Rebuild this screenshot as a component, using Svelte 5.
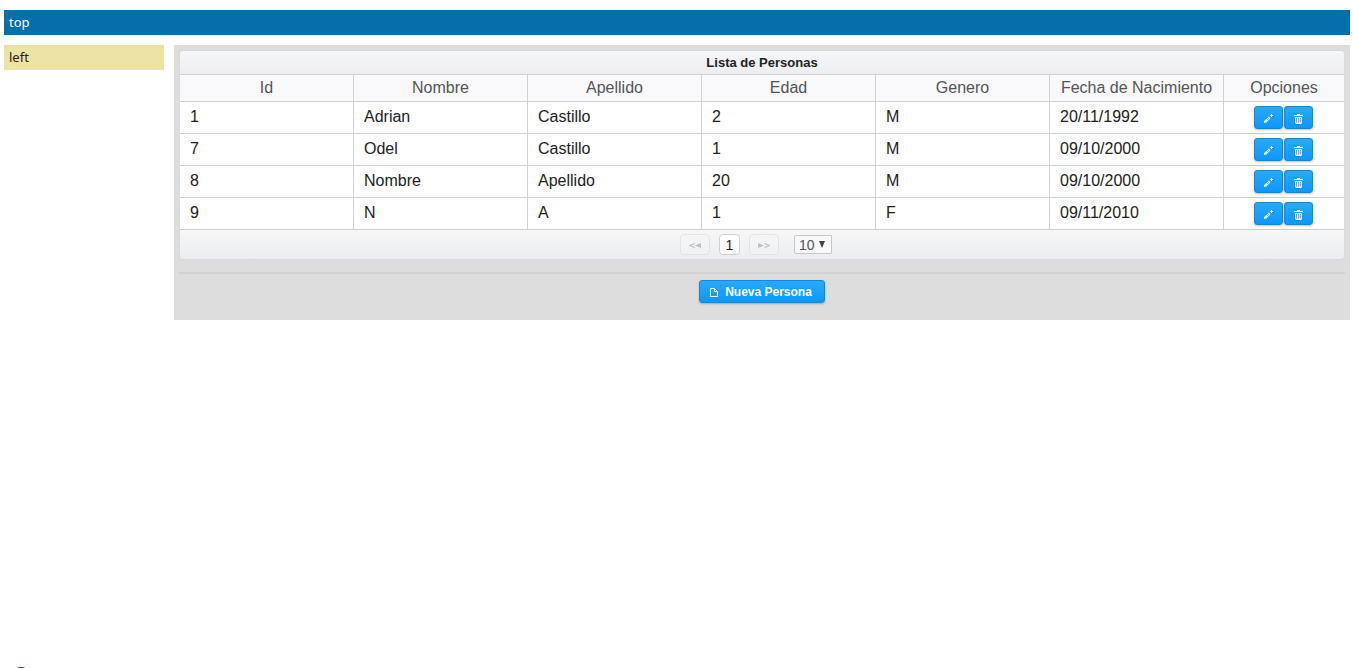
<script>
  const columns = ['Id', 'Nombre', 'Apellido', 'Edad', 'Genero', 'Fecha de Nacimiento'];
  const people = [
    ['1', 'Adrian', 'Castillo', '2', 'M', '20/11/1992'],
    ['7', 'Odel', 'Castillo', '1', 'M', '09/10/2000'],
    ['8', 'Nombre', 'Apellido', '20', 'M', '09/10/2000'],
    ['9', 'N', 'A', '1', 'F', '09/11/2010'],
  ];
</script>

<div class="page">
  <header class="top">top</header>
  <div class="body">
    <aside class="left">left</aside>
    <main>
      <section class="datatable">
        <h2 id="list-title">Lista de Personas</h2>
        <table aria-labelledby="list-title">
          <thead>
            <tr>
              {#each columns as column}
                <th scope="col">{column}</th>
              {/each}
              <th scope="col" class="options">Opciones</th>
            </tr>
          </thead>
          <tbody>
            {#each people as person}
              <tr>
                {#each person as value}
                  <td>{value}</td>
                {/each}
                <td class="options">
                  <div class="actions">
                    <button class="blue icon" aria-label="Editar">
                      <svg width="9" height="9" viewBox="0 0 9 9" fill="#fff">
                        <path d="M0 9 .4 6.7 4.9 2.4 6.6 4.1 2.3 8.6Z" />
                        <path d="M6 1H7V0H8V1H9V2H8V3H7V2H6Z" />
                        <path d="M1.4 7.6 5 4" fill="none" stroke="#1b9df5" stroke-width=".7" stroke-dasharray="1.2 .8" />
                      </svg>
                    </button>
                    <button class="blue icon" aria-label="Eliminar">
                      <svg width="9" height="10" viewBox="0 0 9 10" fill="#fff">
                        <path d="M3 0H6V1H9V2H0V1H3Z" />
                        <path fill-rule="evenodd" d="M1 3H8V9L7 10H2L1 9ZM2.2 4V8.5H3V4ZM4.1 4V8.5H4.9V4ZM6 4V8.5H6.8V4Z" />
                      </svg>
                    </button>
                  </div>
                </td>
              </tr>
            {/each}
          </tbody>
        </table>
        <nav class="paginator" aria-label="Paginación">
          <button class="step" disabled aria-label="Página anterior">
            <svg width="12" height="5" viewBox="0 0 12 5">
              <path d="M5.5 .5 1 2.5 5.5 4.5" fill="none" stroke="#777" stroke-width="1.2" />
              <path d="M12 0V5L6 2.5Z" fill="#777" />
            </svg>
          </button>
          <button class="current">1</button>
          <button class="step" disabled aria-label="Página siguiente">
            <svg width="12" height="5" viewBox="0 0 12 5">
              <path d="M6.5 .5 11 2.5 6.5 4.5" fill="none" stroke="#777" stroke-width="1.2" />
              <path d="M0 0V5L6 2.5Z" fill="#777" />
            </svg>
          </button>
          <div class="rows">
            <select aria-label="Filas por página">
              <option>10</option>
              <option>15</option>
            </select>
            <svg width="6" height="7" viewBox="0 0 6 7"><path d="M0 0H6L3 7Z" fill="#444" /></svg>
          </div>
        </nav>
      </section>
      <hr />
      <button class="blue create">
        <svg width="8" height="9" viewBox="0 0 8 9" fill="none" stroke="#fff">
          <path d="M.5 .5H4.5L7.5 3.5V8.5H.5Z" />
          <path d="M4.5 .5V3.5H7.5" />
        </svg>
        Nueva Persona
      </button>
    </main>
  </div>
  <div class="badge"></div>
</div>

<style>
  .page {
    padding: 10px 3px 0 4px;
    font-family: 'Liberation Sans', Arial, sans-serif;
    font-size: 16px;
    color: #222;
  }
  .top,
  .left {
    box-sizing: border-box;
    padding: 5px;
    font: 13px/15px 'Noto Sans', sans-serif;
  }
  .top {
    background: #036fab;
    color: #fff;
  }
  .body {
    display: flex;
    align-items: flex-start;
    gap: 10px;
    margin-top: 10px;
  }
  .left {
    flex: 0 0 160px;
    background: #ece3a5;
    color: #222;
  }
  main {
    flex: 1;
    min-width: 0;
    display: flex;
    flex-direction: column;
    padding: 5px 5px 17px;
    background: #ddd;
  }
  .datatable {
    border: 1px solid #d8d8d8;
    border-radius: 4px;
    overflow: hidden;
  }
  h2 {
    margin: 0;
    padding: 4px 10px;
    border-bottom: 1px solid #d0d0d2;
    background: linear-gradient(#f6f7f9, #ebedf0);
    font-size: 13px;
    line-height: 15px;
    text-align: center;
  }
  table {
    width: 100%;
    table-layout: fixed;
    border-collapse: separate;
    border-spacing: 0;
    background: #fff;
  }
  th,
  td {
    border-right: 1px solid #d0d0d2;
    border-bottom: 1px solid #d0d0d2;
    line-height: 18px;
  }
  th {
    padding: 4px 0;
    background: #f9f9fb;
    color: #555;
    font-weight: 400;
    white-space: nowrap;
  }
  td {
    padding: 4px 10px;
    height: 23px;
    vertical-align: top;
    line-height: 22px;
  }
  .options {
    width: 120px;
    padding-inline: 0;
    border-right: 0;
  }
  .actions {
    display: flex;
    justify-content: center;
    gap: 1px;
    padding-right: 2px;
  }
  button {
    box-sizing: border-box;
    display: flex;
    align-items: center;
    justify-content: center;
    padding: 0;
    font-family: inherit;
  }
  .blue {
    height: 23px;
    border: 1px solid #1a86d0;
    border-radius: 3px;
    background: linear-gradient(#27aaff, #0a98ff);
    box-shadow: 0 1px 2px rgb(0 0 0 / 25%);
    color: #fff;
  }
  .icon {
    width: 29px;
    padding-top: 2px;
  }
  .create {
    align-self: center;
    gap: 7px;
    padding: 1px 12px 0 10px;
    font-size: 12px;
    font-weight: 700;
    line-height: 15px;
  }
  .paginator {
    display: flex;
    justify-content: center;
    align-items: center;
    height: 29px;
    padding-right: 12px;
    background: linear-gradient(#f6f7f9, #ebedf0);
  }
  .step,
  .current {
    height: 21px;
    border: 1px solid #d0d0d2;
    border-radius: 4px;
  }
  .step {
    width: 30px;
    background: #f7f7f9;
    opacity: 0.4;
  }
  .step svg {
    margin-top: 2px;
  }
  .current {
    width: 21px;
    margin: 0 9px;
    background: #fff;
    color: #222;
    font-size: 14px;
  }
  .rows {
    position: relative;
    margin-left: 15px;
  }
  select {
    display: block;
    box-sizing: border-box;
    width: 38px;
    height: 19px;
    padding: 0 4px;
    border: 1px solid #c8c8ca;
    border-radius: 2px 0 0 2px;
    background: #f8f8fa;
    appearance: none;
    color: #555;
    font-family: inherit;
    font-size: 14px;
  }
  .rows svg {
    position: absolute;
    top: 6px;
    right: 7px;
    pointer-events: none;
  }
  hr {
    width: 100%;
    height: 2px;
    margin: 12px 0 6px;
    border: 0;
    background: #d2d2d2;
  }
  .badge {
    position: fixed;
    bottom: -23px;
    left: 9px;
    width: 24px;
    height: 24px;
    border-radius: 50%;
    background: #23425f;
  }
</style>
